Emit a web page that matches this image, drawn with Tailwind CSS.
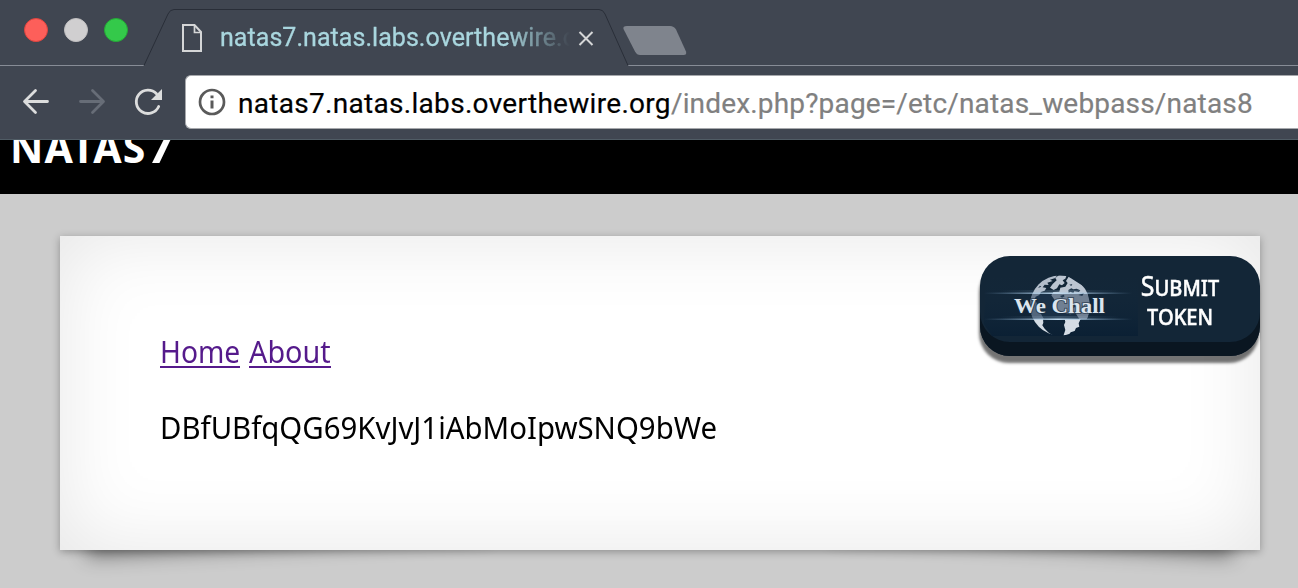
<!DOCTYPE html>
<html lang="en">
<head>
<meta charset="utf-8">
<title>natas7.natas.labs.overthewire.org</title>
<script src="https://cdn.jsdelivr.net/npm/@tailwindcss/browser@4"></script>
</head>
<body class="w-[1298px] h-[588px] overflow-hidden bg-[#cccccc] font-['Noto_Sans',sans-serif]">
<div class="flex h-full flex-col">
  <header class="relative h-[140px] shrink-0 bg-[#404651]">
    <svg class="absolute inset-0" width="1298" height="140" fill="none">
      <path d="M0 65.5H144M628 65.5H1298" stroke="#878c96"/>
      <path d="M144 65.5L168 14Q170 9.500 174 9.500H599Q603 9.500 605 14L628 65.500" stroke="#292e38"/>
      <path d="M627 26H670Q674 26 676 29.500L686 51.500Q687 55 683.500 55H640Q637 55 635 51.500L623.500 29Q622.500 26 627 26Z" fill="#7f848d"/>
      <path d="M0 139.500H1298" stroke="#505c65"/>
    </svg>
    <div class="relative flex h-[66px] pl-6">
      <div class="flex gap-4 pt-[18px]">
        <span class="size-6 rounded-full border border-[#e0443e] bg-[#fd5f5a]"></span>
        <span class="size-6 rounded-full border border-[#c0bfc0] bg-[#d0cfd0]"></span>
        <span class="size-6 rounded-full border border-[#24aa36] bg-[#34c94a]"></span>
      </div>
      <svg class="mt-6 ml-[54px]" width="20" height="28" viewBox="0 0 20 28" fill="none" stroke="#d5d6d7" stroke-width="2"><path d="M1 1H12.500L19 8V27H1Z"/><path d="M12.500 1V8.500H19" stroke-width="1.700"/></svg>
      <div class="ml-[18px] w-[350px] overflow-hidden whitespace-nowrap pt-[19px] font-['Roboto',sans-serif] text-[25px] leading-[38px] text-[#a9d6de] [-webkit-text-stroke:0.3px_#a9d6de] [mask-image:linear-gradient(to_right,black_82%,transparent_100%)]"><span class="inline-block tracking-[0.050px]">natas7.natas.labs.overthewire.org</span></div>
      <svg class="mt-[31px] ml-[8px]" width="16" height="15" viewBox="0 0 16 15" stroke="#d5d6d7" stroke-width="2"><path d="M1.500 1L14.500 14M14.500 1L1.500 14"/></svg>
    </div>
    <div class="relative flex h-[74px] pt-[9px]">
      <svg class="shrink-0" width="185" height="54" viewBox="0 75 185 54" fill="none" stroke="#dcdddd" stroke-width="2.800" stroke-linecap="round" stroke-linejoin="round">
        <path d="M47.500 101.500H25M35.500 90.500L24.500 101.500L35.500 112.500"/>
        <path d="M80.500 101.500H103M92.500 90.500L103.500 101.500L92.500 112.500" stroke="#676d77"/>
        <path d="M156.500 93.700A11.700 11.700 0 1 0 158.700 106.500" stroke-width="2.800"/>
        <path d="M162 89V100H151Z" fill="#dcdddd" stroke="none"/>
      </svg>
      <div class="flex h-[54px] flex-1 items-center rounded-l-md border border-r-0 border-[#a6a8ac] bg-white pl-3 font-['Roboto',sans-serif] text-[28px]">
        <svg class="shrink-0" width="28" height="28" viewBox="0 0 28 28" fill="none" stroke="#5a5a5a"><circle cx="14" cy="14" r="12" stroke-width="2.700"/><path d="M14 7.500V10.300M14 12.500V20.500" stroke-width="3"/></svg>
        <span class="ml-3 inline-block whitespace-nowrap pt-[3px] tracking-[0.300px] text-black [-webkit-text-stroke:0.2px]">natas7.natas.labs.overthewire.org<span class="tracking-[0.170px] text-[#808080]">/index.php?page=/etc/natas_webpass/natas8</span></span>
      </div>
    </div>
  </header>
  <div class="h-[54px] shrink-0 overflow-hidden bg-black pl-[10px]">
    <h1 class="-mt-[20px] inline-block text-[41px] leading-[54px] font-bold tracking-[1.200px] text-white">NATAS<span class="inline-block origin-left scale-x-[1.120]">7</span></h1>
  </div>
  <main class="relative isolate mt-[42px] ml-[60px] h-[314px] w-[1200px] shrink-0">
    <div class="absolute bottom-[30px] left-[24px] -z-10 h-[20%] w-[400px] -rotate-3 shadow-[0_26px_20px_rgba(0,0,0,0.45)]"></div>
    <div class="absolute right-[24px] bottom-[30px] -z-10 h-[20%] w-[400px] rotate-3 shadow-[0_26px_20px_rgba(0,0,0,0.45)]"></div>
    <div class="flex h-full justify-between bg-white pt-5 pl-[100px] shadow-[0_2px_8px_rgba(0,0,0,0.3),inset_0_0_80px_rgba(0,0,0,0.1)]">
      <div class="pt-[77px] text-[30px] leading-[38px] text-black">
        <p class="flex gap-[9px] whitespace-nowrap text-[#551a8b]"><a class="h-[35px] w-[80px] border-b-2 border-[#551a8b]"><span class="inline-block origin-left scale-x-[0.940]">Home</span></a><a class="h-[35px] w-[82px] border-b-2 border-[#551a8b]"><span class="inline-block origin-left scale-x-[0.960]">About</span></a></p>
        <p class="mt-[41px]"><span class="inline-block origin-left scale-x-[0.979]">DBfUBfqQG69KvJvJ1iAbMoIpwSNQ9bWe</span></p>
      </div>
      <div class="flex h-[100px] w-[280px] rounded-[30px] bg-[#132637] shadow-[inset_0_-14px_0_#0a1621,-1px_7px_3px_rgba(0,0,0,0.55)]">
        <svg width="158" height="86" viewBox="980 256 158 86">
          <defs>
            <linearGradient id="glow"><stop stop-color="#7ba4c8" stop-opacity="0"/><stop offset=".5" stop-color="#bed8ec"/><stop offset="1" stop-color="#7ba4c8" stop-opacity="0"/></linearGradient>
            <linearGradient id="band" x2="0" y2="1"><stop stop-color="#142a3d" stop-opacity="0"/><stop offset="1" stop-color="#0b2034"/></linearGradient>
            <clipPath id="disc"><circle cx="1060" cy="305.500" r="30"/></clipPath>
          </defs>
          <path d="M986 276H1138V336H992L984 324Z" fill="url(#band)"/>
          <g clip-path="url(#disc)">
            <g transform="translate(1010 270) scale(.3333)">
              <path fill="#b3bdca" d="M58 94L66 60L90 35L120 16H142L136 24L120 29L128 33L112 38L116 45L104 44L98 52L109 54L104 62L93 66L88 75L77 80L72 92Z"/>
              <path fill="#bcc5d1" d="M120 53L128 42L140 31L136 24L146 16H170L166 26L158 31L164 39L156 46L148 43L141 55L131 60Z"/>
              <path fill="#bcc5d1" d="M176 20L230 55L242 110L234 148L208 147L197 130L180 133L160 127L142 124L128 108L134 90L124 76L130 66L148 65L151 53L166 50L173 39L168 33Z"/>
              <path fill="#8392a5" d="M59 90H76L82 104L79 120L92 130L102 148H64Z"/>
              <path fill="#d5dce4" d="M62 147H99L100 158L97 166L104 176L116 188L132 198L110 198L76 174Z"/>
              <path fill="#d5dce4" d="M164 147H212L206 160L208 170L198 174L194 183L182 187L174 198H160L166 180L162 165L166 156Z"/>
              <path fill="#21364a" d="M175 60L184 55L190 58L200 56L211 61L207 66L193 64L190 70L181 65L176 70ZM178 44L187 42L184 48ZM205 75L222 69L217 78ZM150 78L161 74L164 79L156 83ZM84 54L90 47L94 50ZM184 106L192 102L197 110L190 114Z"/>
            </g>
            <path fill="#243b55" opacity=".5" d="M1028 294H1092V319H1028Z"/>
          </g>
          <path fill="url(#glow)" d="M984 292.500H1132V294H984ZM984 318.500H1132V320H984Z"/>
          <path fill="url(#glow)" opacity=".2" d="M1000 290H1120V293H1000ZM1000 316H1120V319H1000Z"/>
          <text x="1014" y="313" textLength="91" lengthAdjust="spacingAndGlyphs" class="fill-[#dbe5ee] stroke-[#1b2c3e]/60 font-['Liberation_Serif',serif] text-[21px] font-bold [paint-order:stroke]" stroke-width="2">We Chall</text>
        </svg>
        <div class="-ml-[4px] flex w-[92px] origin-center scale-x-[0.890] flex-col items-center pt-[14px] text-[28px] leading-[30px] text-white [-webkit-text-stroke:0.5px_white] [font-variant-caps:small-caps]"><span class="h-[29px]">Submit</span><span>token</span></div>
      </div>
    </div>
  </main>
</div>
</body>
</html>
